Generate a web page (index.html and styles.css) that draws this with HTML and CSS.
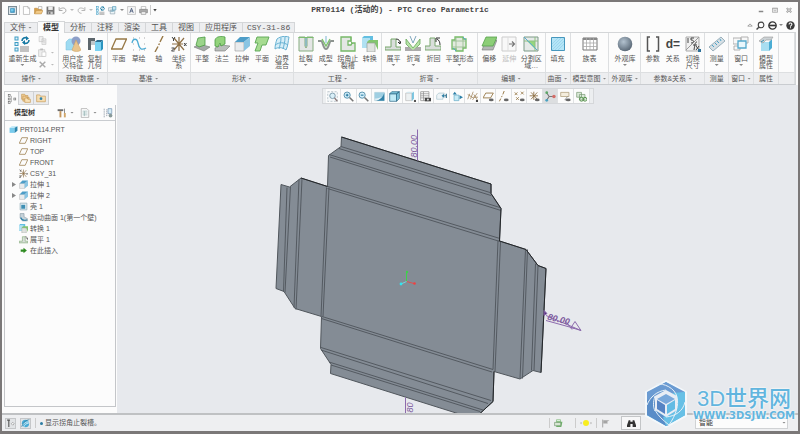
FILE: index.html
```html
<!DOCTYPE html>
<html lang="zh-CN">
<head>
    <meta charset="UTF-8">
    <meta name="viewport" content="width=device-width, initial-scale=1.0">
    <title>PRT0114 (活动的) - PTC Creo Parametric</title>
    <link rel="stylesheet" href="styles.css">
</head>
<body>
    <!-- icon sprite -->
    <svg class="sprite" aria-hidden="true">
        <symbol id="i-app" viewBox="0 0 16 16"><path d="M1 1h14v14H1z" fill="#e9f1f5" stroke="#7d8d96" stroke-width="2"/><path d="M4 4h8v8H4z" fill="#2c86b5"/><path d="M5 5h5v5H5z" fill="#74c8ea"/></symbol>
        <symbol id="i-new" viewBox="0 0 16 16"><path d="M2.500 1h8l3 3v11h-11z" fill="#fff" stroke="#999"/><path d="M10.500 1v3h3" fill="none" stroke="#999"/></symbol>
        <symbol id="i-open" viewBox="0 0 16 16"><path d="M8 1h6v6H8z" fill="#fff" stroke="#999"/><path d="M1 14V4h5l1 2h6v3" fill="#d9a24a" stroke="#b98236"/><path d="M1 14l3-6h12l-3 6z" fill="#f0c987" stroke="#c1904a"/></symbol>
        <symbol id="i-save" viewBox="0 0 16 16"><path d="M1 1h14v14H1z" fill="#777"/><path d="M4 1h8v6H4z" fill="#eee"/><path d="M4 10h8v5H4z" fill="#ccc"/><path d="M5 11h3v3H5z" fill="#666"/></symbol>
        <symbol id="i-undo" viewBox="0 0 16 16"><path d="M3 6c4-4 11-3 11 2 0 3-3 5-6 5M2 2v6h6" fill="none" stroke="#999" stroke-width="1.500"/></symbol>
        <symbol id="i-redo" viewBox="0 0 16 16"><path d="M13 6C9 2 2 3 2 8c0 3 3 5 6 5M14 2v6H8" fill="none" stroke="#aaa" stroke-width="1.500"/></symbol>
        <symbol id="i-regen" viewBox="0 0 16 16"><g fill="#dff1f8" stroke="#3e9cc4"><rect x="1" y="1" width="3" height="3"/><rect x="1" y="6.500" width="3" height="3"/><rect x="1" y="12" width="3" height="3"/></g><path d="M6 11h9M6 13h9M6 15h9" stroke="#888"/><path d="M8 5c0-3 3-4 5-3M15 4c0 3-3 4-5 3" fill="none" stroke="#1679a3" stroke-width="1.600"/><path d="M12 0l3 2.500-3 2zM11 9L8 6.500 11 4z" fill="#1679a3"/></symbol>
        <symbol id="i-windows" viewBox="0 0 16 16"><path d="M1 3h8v6H1zM4 7h8v7H4z" fill="#eef5f8" stroke="#829aa5"/><path d="M8 1h6v6H8z" fill="#c9e6f2" stroke="#3e8eb0"/><path d="M5 9h6" stroke="#3e8eb0"/></symbol>
        <symbol id="i-close" viewBox="0 0 16 16"><path d="M1 1h14v14H1z" fill="#f5f5f5" stroke="#aaa"/><path d="M5 12l3-8 3 8M6 9h4" fill="none" stroke="#457" stroke-width="1.500"/></symbol>
        <symbol id="i-print" viewBox="0 0 16 16"><path d="M4 1h8v5H4z" fill="#fff" stroke="#999"/><path d="M1 6h14v6H1z" fill="#aaa" stroke="#777"/><path d="M4 10h8v5H4z" fill="#eee" stroke="#888"/></symbol>
        <symbol id="i-copy" viewBox="0 0 16 16"><path d="M2 1h7v9H2zM7 5h7v10H7z" fill="#f2f2f2" stroke="#bbb"/><path d="M9 8h4M9 10h4M9 12h4" stroke="#ccc"/></symbol>
        <symbol id="i-paste" viewBox="0 0 16 16"><path d="M1 3h11v12H1z" fill="#eee" stroke="#bbb"/><path d="M4 1h5v3H4z" fill="#bbb"/><path d="M7 7h7v8H7z" fill="#fff" stroke="#bbb"/></symbol>
        <symbol id="i-delete" viewBox="0 0 16 16"><path d="M3 3l10 10M13 3L3 13" stroke="#aaa" stroke-width="2.500"/></symbol>
        <symbol id="i-udf" viewBox="0 0 16 16"><path d="M1 6l3-3h8v8l-3 3H1z" fill="#9edbf2" stroke="#79bddb" stroke-width=".5"/><circle cx="11" cy="5" r="4.500" fill="#8d9fc8"/><path d="M11 4l5 10c-2 2-7 2-9 0z" fill="#e8c48c" stroke="#c99c5c" stroke-width=".5"/></symbol>
        <symbol id="i-copygeom" viewBox="0 0 16 16"><path d="M1 2h7v3H4v9H1z" fill="#5d666c"/><path d="M4 5h5v4H4z" fill="#c0c7cb"/><path d="M8 6h6v9H8z" fill="#79d2f3"/><path d="M8 6l2-2h6l-2 2z" fill="#2d6e91"/><path d="M14 6l2-2v9l-2 2z" fill="#2b94bf"/></symbol>
        <symbol id="i-plane" viewBox="0 0 16 16"><path d="M5 3h10.500L11 13H.5z" fill="none" stroke="#977846" stroke-width="1.300"/></symbol>
        <symbol id="i-sketch" viewBox="0 0 16 16"><path d="M2 2h1M8 2h1M13 2h1M2 14h1M8 14h1M13 14h1M2 8h1M13 8h1" stroke="#aaa"/><path d="M1 7c1-5 5-5 6 0s3 8 8 5" fill="none" stroke="#4baad3" stroke-width="1.300"/></symbol>
        <symbol id="i-axis" viewBox="0 0 16 16"><path d="M12 0L9 6M8.500 7.500l-.8 1.500M7 10.500L4 16" stroke="#977846" stroke-width="1.400"/></symbol>
        <symbol id="i-csys" viewBox="0 0 16 16"><path d="M1 8h11M8 1v14M3 2l10 12M13 2L3 14" stroke="#8f7147" stroke-width="1.200"/><path d="M13 7l2.500 3M15.500 7L13 10M1 1l1.500 2L4 1M2.500 3v2M.5 12h3l-3 3h3" fill="none" stroke="#444"/></symbol>
        <symbol id="i-flat" viewBox="0 0 16 16"><path d="M0 11l6-3 10 3-6 4z" fill="#a3aaa6" stroke="#777" stroke-width=".6"/><path d="M2 9l2-7 7-1v8l-6 2z" fill="#9bd48a" stroke="#4a9a43" stroke-width=".8"/></symbol>
        <symbol id="i-flange" viewBox="0 0 16 16"><path d="M1 12l6-3 9 1-5 5H1z" fill="#b9bebb" stroke="#777" stroke-width=".6"/><path d="M1 10V4c1-4 7-4 10-3v7l-4 2-1-3-2 4z" fill="#93d47c" stroke="#4a9a43" stroke-width=".8"/></symbol>
        <symbol id="i-extrude" viewBox="0 0 16 16"><path d="M1 6h9v9H1z" fill="#e9ebed" stroke="#999" stroke-width=".6"/><path d="M1 6l5-5h10l-6 5z" fill="#4d9dc8"/><path d="M10 6l6-5v9l-6 5z" fill="#8ac5e3"/></symbol>
        <symbol id="i-planar" viewBox="0 0 16 16"><path d="M3 1h12l-3 8H8l-2 6H1l3-8H1z" fill="#a6db91" stroke="#59a652" stroke-width=".9"/></symbol>
        <symbol id="i-blend" viewBox="0 0 16 16"><path d="M3 3c4-3 8-3 12-2-1 5-1 9-3 13-4-3-8-3-11-1 0-4 1-7 2-10z" fill="#d6eef8" stroke="#67b1d2"/><path d="M7 1.500C7 6 6 9 5 13M11 1c0 5-1 8-2 12M1 9c5-3 8-3 13 0" fill="none" stroke="#67b1d2"/></symbol>
        <symbol id="i-rip" viewBox="0 0 16 16"><path d="M1 1h6v9l1 2 1-2V1h6v14H1z" fill="#e4e6e5" stroke="#86ad80"/><path d="M.5 1.500h15" stroke="#7dbd6f"/><path d="M8 2v8" stroke="#5aa0bf"/></symbol>
        <symbol id="i-form" viewBox="0 0 16 16"><path d="M0 5h3c2 0 2 8 5 8s3-8 5-8h3" fill="none" stroke="#8d9490" stroke-width="2"/><path d="M4 3l4 7 4-7" fill="none" stroke="#7cc36c" stroke-width="1.400"/><path d="M8 0v7" stroke="#7ab7d1"/></symbol>
        <symbol id="i-relief" viewBox="0 0 16 16"><path d="M1 1h10v4H8v4h3l1-2h3v8H1z" fill="#e4e7e4" stroke="#76b867" stroke-width="1.300"/><path d="M11 1v5l2 2" fill="none" stroke="#76b867"/></symbol>
        <symbol id="i-convert" viewBox="0 0 16 16"><path d="M0 2l2-2h9v6H6v6H0z" fill="#63bfe1"/><path d="M0 2h8v10H0z" fill="#b0e1f2"/><path d="M5 6l2-2h9v10l-3-6H5z" fill="#83c56f"/><path d="M5 7h8v9H5z" fill="#dfe2df" stroke="#9a9f9a" stroke-width=".7"/></symbol>
        <symbol id="i-unbend" viewBox="0 0 16 16"><path d="M0 11h6V3h5v8h5v3H0z" fill="#d9dedb" stroke="#77a66b"/><path d="M11 3c3 0 4 2 4 4M13 6l2 2 1-3" fill="none" stroke="#333"/></symbol>
        <symbol id="i-bend" viewBox="0 0 16 16"><path d="M1 3l7 9 7-9v5l-7 7-7-7z" fill="#b7e5a8" stroke="#67a85a" stroke-width=".8"/><path d="M0 11h4l4 3 4-3h4v4H0z" fill="#ababab"/><path d="M5 0l3 7 3-7" fill="none" stroke="#7fa7bd"/></symbol>
        <symbol id="i-bendback" viewBox="0 0 16 16"><path d="M0 10h5V2h5v8h6v4H0z" fill="#d9dedb" stroke="#7aa870"/><path d="M15 9c0-3-1-5-3-6M11 6V2h4" fill="none" stroke="#333"/></symbol>
        <symbol id="i-flatpat" viewBox="0 0 16 16"><path d="M4 1h8v2h3v9h-3v3H5v-2H1V4h3z" fill="#e3eadf" stroke="#75ba65" stroke-width="1.300"/><path d="M5 1v14M12 3v9M1 5h14M1 11h14" stroke="#95bb8d" stroke-width=".8"/><path d="M2 12l3 3M12 1l3 3" stroke="#52a9ce"/></symbol>
        <symbol id="i-offset" viewBox="0 0 16 16"><path d="M5 4h11l-4 10H1z" fill="#b3b7b5" stroke="#777" stroke-width=".6"/><path d="M5 1h11l-4 9H1z" fill="#8cce77" stroke="#56a14b" stroke-width=".8"/></symbol>
        <symbol id="i-extend" viewBox="0 0 16 16"><path d="M1 1h14v14H1z" fill="#f8f8f8" stroke="#ccc"/><path d="M7 1v14" stroke="#ddd"/><path d="M8 8h5M11 5.500L13.500 8 11 10.500" fill="none" stroke="#777" stroke-width="1.200"/></symbol>
        <symbol id="i-split" viewBox="0 0 16 16"><path d="M1 1h14v14H1z" fill="#e6eae8" stroke="#7c9a87"/><path d="M4 5h8v8z" fill="#94d67e"/><path d="M1 5h14M12 1v14" stroke="#8fc082"/><path d="M1 1l13 13" stroke="#58abd0"/></symbol>
        <symbol id="i-fill" viewBox="0 0 16 16"><path d="M1.500 1.500h13v13h-13z" fill="#b5e5f7" stroke="#4797bd"/><path d="M2 8l6-6M2 14L14 2M8 14l6-6M2 11l9-9M5 14l9-9" stroke="#8fd0ea" stroke-width=".7"/></symbol>
        <symbol id="i-table" viewBox="0 0 16 16"><path d="M1 2h14v12H1z" fill="#fff" stroke="#777"/><path d="M1 2h14v2H1z" fill="#888"/><path d="M1 7h14M1 10.500h14M4.500 2v12M8 2v12M11.500 2v12" stroke="#aaa" stroke-width=".8"/></symbol>
        <symbol id="i-sphere" viewBox="0 0 16 16"><defs><radialGradient id="ball" cx=".4" cy=".35" r=".7"><stop offset="0" stop-color="#b3c2cf"/><stop offset=".6" stop-color="#7b8a98"/><stop offset="1" stop-color="#546270"/></radialGradient></defs><circle cx="8" cy="8" r="7.300" fill="url(#ball)"/></symbol>
        <symbol id="i-param" viewBox="0 0 16 16"><path d="M5 1H2.500v14H5M11 1h2.500v14H11" fill="none" stroke="#555" stroke-width="1.500"/></symbol>
        <symbol id="i-dims" viewBox="0 0 16 16"><path d="M1 1h13v14H1z" fill="#f0f0f0" stroke="#aaa"/><path d="M1 14L14 1" stroke="#999"/><path d="M3 2v5M9 2H6v2c4 0 3 3 0 3M12 6c-2 0-2 2-3 8M8 9h4M11 10l3 4M14 10l-3 4" fill="none" stroke="#444"/><path d="M13 13h3v3h-3z" fill="#2c7199"/></symbol>
        <symbol id="i-measure" viewBox="0 0 16 16"><path d="M0 11L12 1l4 4L4 15z" fill="#d7e0e5" stroke="#9ab0bc"/><path d="M3 9l2 2M6 7l2 2M8 5l2 2M11 3l1 2" stroke="#4da2c8"/></symbol>
        <symbol id="i-window" viewBox="0 0 16 16"><path d="M0 2h8v6H0zM8 1h7v6H8zM1 10h6v4H1z" fill="#f8f8f8" stroke="#aaa" stroke-width=".9"/><path d="M5 5h8v7H5z" fill="#e9f7fc" stroke="#55a9cc" stroke-width="1.300"/></symbol>
        <symbol id="i-props" viewBox="0 0 16 16"><path d="M3 6h8v9H3z" fill="#a9def1"/><path d="M11 6l3-3v9l-3 3z" fill="#4badd4"/><path d="M1 5l5-4h9l-2 3H8L5 7z" fill="#ccd2d5" stroke="#999" stroke-width=".6"/><path d="M3 6l3-2" stroke="#398eae"/></symbol>
        <symbol id="i-fit" viewBox="0 0 16 16"><path d="M1 1h14v14H1z" fill="#f5f8fa" stroke="#a8b5bc" stroke-dasharray="3 2"/><circle cx="8" cy="7" r="4" fill="#d9eff8" stroke="#7898a8" stroke-width="1.300"/><path d="M11 10l4 5" stroke="#877" stroke-width="2"/></symbol>
        <symbol id="i-zoomin" viewBox="0 0 16 16"><circle cx="6" cy="6" r="4.500" fill="#d5effa" stroke="#5a93ae" stroke-width="1.400"/><path d="M9.500 9.500L15 15" stroke="#777" stroke-width="2.300"/><path d="M4 6h4M6 4v4" stroke="#146c96" stroke-width="1.400"/></symbol>
        <symbol id="i-zoomout" viewBox="0 0 16 16"><circle cx="6" cy="6" r="4.500" fill="#d5effa" stroke="#5a93ae" stroke-width="1.400"/><path d="M9.500 9.500L15 15" stroke="#777" stroke-width="2.300"/><path d="M4 6h4" stroke="#146c96" stroke-width="1.400"/></symbol>
        <symbol id="i-repaint" viewBox="0 0 16 16"><path d="M1 2h14v12H1z" fill="#dff1f7" stroke="#b5cdd6"/><path d="M1 2h14v3C12 10 7 10 1 11z" fill="#9fcfe2"/><path d="M15 3v11H3C9 13 13 9 15 3z" fill="#3182a8"/></symbol>
        <symbol id="i-shade" viewBox="0 0 16 16"><path d="M1 4h10v11H1z" fill="#c2ebf7" stroke="#276583"/><path d="M1 4l3-3h11l-4 3zM11 4l4-3v10l-4 4z" fill="#7fc7de" stroke="#276583"/></symbol>
        <symbol id="i-views" viewBox="0 0 16 16"><path d="M1 3h9v11H1z" fill="#edf1f2" stroke="#bbb"/><path d="M10 3l3-2v10l-3 4z" fill="#79c4df"/><path d="M1 3l3-2h9l-3 2z" fill="#d3e7ee"/><path d="M13 13h3v3h-3z" fill="#555"/></symbol>
        <symbol id="i-viewmgr" viewBox="0 0 16 16"><path d="M1 1h12v13H1z" fill="#fff" stroke="#888"/><path d="M1 4h12M1 7h12M1 10h12M5 1v13" stroke="#888"/><path d="M7 10h9v5H7z" fill="#444"/><circle cx="11.500" cy="12.500" r="1.500" fill="#ddd"/></symbol>
        <symbol id="i-dir" viewBox="0 0 16 16"><path d="M1 6l3-3h8l-2 3v6H1z" fill="#eef5f8" stroke="#a7c3ce"/><path d="M15 4v6M15 7h-3" stroke="#2d6f8c" stroke-width="1.600"/><path d="M12 4v6L8 7z" fill="#2d7fa5"/></symbol>
        <symbol id="i-dir2" viewBox="0 0 16 16"><path d="M3 6h7v8H3z" fill="#c8ebf6" stroke="#64aac6"/><path d="M4 1l3 4H1zM16 9l-5-3v6z" fill="#2b7fa7"/></symbol>
        <symbol id="i-datums" viewBox="0 0 16 16"><path d="M1 12L4 4M1 5l8 5M5 12L9 1M8 13l7-10M10 5l5 8M9 9h7" stroke="#97774a"/><path d="M13 13h3v3h-3z" fill="#444"/></symbol>
        <symbol id="i-planeshow" viewBox="0 0 16 16"><path d="M4 3h11l-4 7H0z" fill="none" stroke="#977846" stroke-width="1.300"/><ellipse cx="12" cy="13" rx="3.500" ry="2" fill="#666"/></symbol>
        <symbol id="i-axisshow" viewBox="0 0 16 16"><path d="M9 0L7 5M6 7l-1 2M4 11l-2 4" stroke="#977846" stroke-width="1.400"/><ellipse cx="12" cy="13" rx="3.500" ry="2" fill="#666"/></symbol>
        <symbol id="i-pointshow" viewBox="0 0 16 16"><path d="M1 2l4 4M5 2L1 6M10 1l4 4M14 1l-4 4M3 9l4 4M7 9l-4 4" stroke="#977846" stroke-width="1.200"/><ellipse cx="12" cy="13" rx="3.500" ry="2" fill="#666"/></symbol>
        <symbol id="i-csysshow" viewBox="0 0 16 16"><path d="M1 7h12M7 1v12M3 2l9 10M12 2L3 12" stroke="#8f7147" stroke-width="1.300"/><ellipse cx="12" cy="13" rx="3.500" ry="2" fill="#666"/></symbol>
        <symbol id="i-spin" viewBox="0 0 16 16"><path d="M2 2l4 6 6 0M6 8l-4 6" fill="none" stroke="#777" stroke-width="1.500"/><circle cx="13" cy="8" r="2.500" fill="#d36d68"/><circle cx="2.500" cy="2.500" r="2" fill="#5da667"/><circle cx="2.500" cy="13.500" r="2" fill="#4aa2c1"/></symbol>
        <symbol id="i-annot" viewBox="0 0 16 16"><path d="M1 2h12v6H1z" fill="#f4eddd" stroke="#a89671"/><path d="M11 8l-4 5h4" fill="none" stroke="#777"/><ellipse cx="12" cy="13" rx="3.500" ry="2" fill="#666"/></symbol>
        <symbol id="i-sim" viewBox="0 0 16 16"><path d="M1 2h7v7H1zM5 5h8v8H5z" fill="#dbead9" stroke="#759670"/><circle cx="8" cy="12" r="2.800" fill="none" stroke="#54924b" stroke-width="1.400"/><circle cx="13" cy="12" r="2.800" fill="none" stroke="#54924b" stroke-width="1.400"/></symbol>
        <symbol id="i-tree" viewBox="0 0 16 16"><g fill="#fff" stroke="#666"><rect x="2" y="1" width="3" height="3"/><rect x="2" y="6.500" width="3" height="3"/><rect x="2" y="12" width="3" height="3"/><rect x="11" y="6.500" width="3" height="3"/></g><path d="M7 3v10" stroke="#888"/></symbol>
        <symbol id="i-folders" viewBox="0 0 16 16"><path d="M1 2h5l1 2h4v6H1zM3 5h5l1 2h4v6H3z" fill="#f2d09a" stroke="#c4954f"/><path d="M6 8h4l1 2h4v5H6z" fill="#f8e1b8" stroke="#c4954f"/></symbol>
        <symbol id="i-fav" viewBox="0 0 16 16"><path d="M1 3h5l1 2h8v9H1z" fill="#f6ddb0" stroke="#c4954f"/><circle cx="8" cy="9" r="2.200" fill="#2f83ab"/></symbol>
        <symbol id="i-tools" viewBox="0 0 16 16"><path d="M1 2h9v3H1z" fill="#6c6c6c"/><path d="M4 5h3v10H4z" fill="#c3965d"/><path d="M12 1v8" stroke="#888" stroke-width="1.500"/><path d="M11 8h3v7h-3z" fill="#d1a669"/></symbol>
        <symbol id="i-doc" viewBox="0 0 16 16"><path d="M2 1h9l3 3v11H2z" fill="#fff" stroke="#999"/><path d="M4 5h8M4 8h8M4 11h8M7 5v8" stroke="#8aa"/></symbol>
        <symbol id="i-filter" viewBox="0 0 16 16"><path d="M1 2h3M1 5h3M1 8h3M1 11h3M1 14h3M6 2v12" stroke="#678" stroke-dasharray="2 1"/><path d="M8 1h6v8H8z" fill="#d6edf6" stroke="#68a"/><circle cx="12" cy="12" r="3" fill="#899"/></symbol>
        <symbol id="i-part" viewBox="0 0 16 16"><path d="M1 5h9v9H1z" fill="#78cbed"/><path d="M1 5l4-3h10l-5 3z" fill="#b4e5f6"/><path d="M10 5l5-3v8l-5 4z" fill="#2c86ad"/></symbol>
        <symbol id="i-shell" viewBox="0 0 16 16"><path d="M2 2h12v12H2z" fill="#e2eef3" stroke="#9bb4bf" stroke-width="1.500"/><path d="M4 5h7v7H4z" fill="#3e8fb4"/></symbol>
        <symbol id="i-driven" viewBox="0 0 16 16"><path d="M2 1h7v6l6 3v4H6l-4-5z" fill="#c6d3da" stroke="#7e929d"/><path d="M3 8c2 5 6 6 11 4" fill="none" stroke="#2e82a9" stroke-width="2"/></symbol>
        <symbol id="i-insert" viewBox="0 0 16 16"><path d="M3 6h5V3l6 5-6 5v-3H3z" fill="#2f8b22"/></symbol>
        <symbol id="i-help" viewBox="0 0 16 16"><circle cx="8" cy="8" r="7.500" fill="#3a3a3a"/><path d="M5.500 6c0-4 5.500-3 5 0-.3 2-2.500 1.500-2.500 4M8 11v2" fill="none" stroke="#fff" stroke-width="1.800"/></symbol>
        <symbol id="i-find" viewBox="0 0 16 16"><circle cx="9" cy="7" r="5" fill="#fff" stroke="#444" stroke-width="2"/><path d="M5 11l-4 4" stroke="#444" stroke-width="2.500"/></symbol>
        <symbol id="i-web" viewBox="0 0 16 16"><circle cx="8" cy="8" r="6.500" fill="#fff" stroke="#333" stroke-width="2.500"/><path d="M2 8h12" stroke="#333" stroke-width="3"/></symbol>
        <symbol id="i-up" viewBox="0 0 16 16"><path d="M2 11l6-6 6 6z" fill="#fff" stroke="#888" stroke-width="2"/></symbol>
        <symbol id="i-min" viewBox="0 0 16 16"><path d="M2 12h12" stroke="#888" stroke-width="4"/></symbol>
        <symbol id="i-max" viewBox="0 0 16 16"><path d="M1 3h14v11H1zM1 5h14" fill="none" stroke="#999" stroke-width="2"/><path d="M4 10h8" stroke="#999" stroke-width="2"/></symbol>
        <symbol id="i-x" viewBox="0 0 16 16"><path d="M2 3l12 11M14 3L2 14" stroke="#999" stroke-width="5"/><path d="M3 4l10 9M13 4L3 13" stroke="#fff" stroke-width="1.500"/></symbol>
        <symbol id="i-globe" viewBox="0 0 16 16"><circle cx="8" cy="8" r="6.500" fill="#49abd5"/><path d="M2 10c4-1 5-5 12-5M5 14c1-4 4-6 9-7" fill="none" stroke="#e4f5fb" stroke-width="1.500"/><path d="M1 14C4 5 9 2 15 1" fill="none" stroke="#256f91"/></symbol>
        <symbol id="i-nav" viewBox="0 0 16 16"><path d="M2 2h5M5 2v12" stroke="#555" stroke-width="2"/><path d="M12 6l2.500 2.500L12 11 9.500 8.500z" fill="#fff" stroke="#777"/></symbol>
        <symbol id="i-state" viewBox="0 0 16 16"><path d="M4 5V1h8v4h3l-2 9H4z" fill="#72b56d"/><path d="M1 6h11v6H1z" fill="#d7e6d4" stroke="#60875c"/><path d="M5 3h6" stroke="#e8f5e6" stroke-width="2"/></symbol>
        <symbol id="i-dots" viewBox="0 0 32 16"><circle cx="3" cy="8" r="3" fill="#ccc"/><circle cx="16" cy="8" r="8" fill="#f8ed20"/><circle cx="29" cy="8" r="3" fill="#ccc"/></symbol>
        <symbol id="i-flag" viewBox="0 0 16 16"><path d="M3 1v14" stroke="#999" stroke-width="1.500"/><path d="M4 2h11l-4 3 1 3H4z" fill="#a5a5a5"/></symbol>
        <symbol id="i-bino" viewBox="0 0 16 16"><path d="M3 2h3v3h4V2h3l3 9v3h-6V9H6v5H0v-3z" fill="#333"/></symbol>
    </svg>

    <div class="window">
        <header class="title-bar">
            <div class="quick-access">
                <svg class="icon-s"><use href="#i-app"/></svg>
                <i class="bar"></i>
                <button class="qa" aria-label="新建"><svg class="icon-s"><use href="#i-new"/></svg></button>
                <button class="qa" aria-label="打开"><svg class="icon-s"><use href="#i-open"/></svg></button>
                <button class="qa" aria-label="保存"><svg class="icon-s"><use href="#i-save"/></svg></button>
                <button class="qa" aria-label="撤消"><svg class="icon-s"><use href="#i-undo"/></svg><i class="arrow pale"></i></button>
                <button class="qa" aria-label="重做"><svg class="icon-s"><use href="#i-redo"/></svg><i class="arrow pale"></i></button>
                <button class="qa" aria-label="重新生成"><svg class="icon-s"><use href="#i-regen"/></svg></button>
                <button class="qa" aria-label="窗口"><svg class="icon-s"><use href="#i-windows"/></svg><i class="arrow"></i></button>
                <button class="qa" aria-label="关闭"><svg class="icon-s"><use href="#i-close"/></svg></button>
                <button class="qa" aria-label="打印"><svg class="icon-s"><use href="#i-print"/></svg></button>
                <i class="bar"></i>
                <button class="qa" aria-label="自定义"><i class="arrow dark"></i></button>
            </div>
            <h1>PRT0114 (活动的) - PTC Creo Parametric</h1>
            <div class="window-buttons">
                <button aria-label="最小化"><svg class="icon-xs"><use href="#i-min"/></svg></button>
                <button aria-label="最大化"><svg class="icon-xs"><use href="#i-max"/></svg></button>
                <button aria-label="关闭窗口"><svg class="icon-xs"><use href="#i-x"/></svg></button>
            </div>
        </header>

        <nav class="tabs">
            <button class="tab file">文件<i class="arrow"></i></button>
            <button class="tab active">模型</button>
            <button class="tab">分析</button>
            <button class="tab">注释</button>
            <button class="tab">渲染</button>
            <button class="tab">工具</button>
            <button class="tab">视图</button>
            <button class="tab">应用程序</button>
            <button class="tab mono">CSY-31-86</button>
            <div class="help-buttons">
                <button aria-label="收起"><svg class="icon-xs"><use href="#i-up"/></svg></button>
                <button aria-label="搜索"><svg class="icon-s"><use href="#i-find"/></svg></button>
                <button aria-label="在线"><svg class="icon-s"><use href="#i-web"/></svg><i class="arrow"></i></button>
                <button aria-label="帮助"><svg class="icon-s"><use href="#i-help"/></svg></button>
            </div>
        </nav>

        <section class="ribbon">
            <div class="group">
                <div class="tools">
                    <button class="tool wide"><svg class="icon"><use href="#i-regen"/></svg><span>重新生成</span><i class="arrow"></i></button>
                    <div class="mini-tools">
                        <button aria-label="复制"><svg class="icon-s"><use href="#i-copy"/></svg></button>
                        <button aria-label="粘贴"><svg class="icon-s"><use href="#i-paste"/></svg><i class="arrow pale"></i></button>
                        <button aria-label="删除"><svg class="icon-s"><use href="#i-delete"/></svg><i class="arrow pale"></i></button>
                    </div>
                </div>
                <button class="group-name">操作<i class="arrow"></i></button>
            </div>
            <div class="group">
                <div class="tools">
                    <button class="tool mid"><svg class="icon"><use href="#i-udf"/></svg><span>用户定<br>义特征</span></button>
                    <button class="tool"><svg class="icon"><use href="#i-copygeom"/></svg><span>复制<br>几何</span></button>
                </div>
                <button class="group-name">获取数据<i class="arrow"></i></button>
            </div>
            <div class="group">
                <div class="tools">
                    <button class="tool"><svg class="icon"><use href="#i-plane"/></svg><span>平面</span></button>
                    <button class="tool"><svg class="icon"><use href="#i-sketch"/></svg><span>草绘</span></button>
                    <button class="tool"><svg class="icon"><use href="#i-axis"/></svg><span>轴</span></button>
                    <button class="tool"><svg class="icon"><use href="#i-csys"/></svg><span>坐标<br>系</span></button>
                </div>
                <button class="group-name">基准<i class="arrow"></i></button>
            </div>
            <div class="group">
                <div class="tools">
                    <button class="tool"><svg class="icon"><use href="#i-flat"/></svg><span>平整</span></button>
                    <button class="tool"><svg class="icon"><use href="#i-flange"/></svg><span>法兰</span></button>
                    <button class="tool"><svg class="icon"><use href="#i-extrude"/></svg><span>拉伸</span></button>
                    <button class="tool"><svg class="icon"><use href="#i-planar"/></svg><span>平面</span></button>
                    <button class="tool"><svg class="icon"><use href="#i-blend"/></svg><span>边界<br>混合</span></button>
                </div>
                <button class="group-name">形状<i class="arrow"></i></button>
            </div>
            <div class="group">
                <div class="tools">
                    <button class="tool"><svg class="icon"><use href="#i-rip"/></svg><span>扯裂</span><i class="arrow"></i></button>
                    <button class="tool"><svg class="icon"><use href="#i-form"/></svg><span>成型</span><i class="arrow"></i></button>
                    <button class="tool mid"><svg class="icon"><use href="#i-relief"/></svg><span>拐角止<br>裂槽</span></button>
                    <button class="tool"><svg class="icon"><use href="#i-convert"/></svg><span>转换</span></button>
                </div>
                <button class="group-name">工程<i class="arrow"></i></button>
            </div>
            <div class="group">
                <div class="tools">
                    <button class="tool"><svg class="icon"><use href="#i-unbend"/></svg><span>展平</span><i class="arrow"></i></button>
                    <button class="tool"><svg class="icon"><use href="#i-bend"/></svg><span>折弯</span><i class="arrow"></i></button>
                    <button class="tool"><svg class="icon"><use href="#i-bendback"/></svg><span>折回</span></button>
                    <button class="tool wide"><svg class="icon"><use href="#i-flatpat"/></svg><span>平整形态</span><i class="arrow"></i></button>
                </div>
                <button class="group-name">折弯<i class="arrow"></i></button>
            </div>
            <div class="group">
                <div class="tools">
                    <button class="tool"><svg class="icon"><use href="#i-offset"/></svg><span>偏移</span></button>
                    <button class="tool" disabled><svg class="icon"><use href="#i-extend"/></svg><span>延伸</span></button>
                    <button class="tool mid"><svg class="icon"><use href="#i-split"/></svg><span>分割区<br>域…</span></button>
                </div>
                <button class="group-name">编辑<i class="arrow"></i></button>
            </div>
            <div class="group">
                <div class="tools">
                    <button class="tool"><svg class="icon"><use href="#i-fill"/></svg><span>填充</span></button>
                </div>
                <button class="group-name">曲面<i class="arrow"></i></button>
            </div>
            <div class="group">
                <div class="tools">
                    <button class="tool"><svg class="icon"><use href="#i-table"/></svg><span>族表</span></button>
                </div>
                <button class="group-name">模型意图<i class="arrow"></i></button>
            </div>
            <div class="group">
                <div class="tools">
                    <button class="tool mid"><svg class="icon"><use href="#i-sphere"/></svg><span>外观库</span><i class="arrow"></i></button>
                </div>
                <button class="group-name">外观库<i class="arrow"></i></button>
            </div>
            <div class="group">
                <div class="tools">
                    <button class="tool"><svg class="icon"><use href="#i-param"/></svg><span>参数</span></button>
                    <button class="tool"><b class="formula">d=</b><span>关系</span></button>
                    <button class="tool"><svg class="icon"><use href="#i-dims"/></svg><span>切换<br>尺寸</span></button>
                </div>
                <button class="group-name">参数&amp;关系<i class="arrow"></i></button>
            </div>
            <div class="group">
                <div class="tools">
                    <button class="tool"><svg class="icon"><use href="#i-measure"/></svg><span>测量</span><i class="arrow"></i></button>
                </div>
                <button class="group-name">测量</button>
            </div>
            <div class="group">
                <div class="tools">
                    <button class="tool"><svg class="icon"><use href="#i-window"/></svg><span>窗口</span><i class="arrow"></i></button>
                </div>
                <button class="group-name">窗口<i class="arrow"></i></button>
            </div>
            <div class="group">
                <div class="tools">
                    <button class="tool"><svg class="icon"><use href="#i-props"/></svg><span>模型<br>属性</span></button>
                </div>
                <button class="group-name">属性</button>
            </div>
            <div class="group">
                <div class="tools"></div>
                <div class="group-name"></div>
            </div>
        </section>

        <main class="main">
            <aside class="navigator">
                <div class="nav-tabs">
                    <button class="nav-tab active" aria-label="模型树"><svg class="icon-m"><use href="#i-tree"/></svg></button>
                    <button class="nav-tab" aria-label="文件夹浏览器"><svg class="icon-m"><use href="#i-folders"/></svg></button>
                    <button class="nav-tab" aria-label="收藏夹"><svg class="icon-m"><use href="#i-fav"/></svg></button>
                </div>
                <div class="nav-panel">
                    <div class="nav-head">
                        <h2>模型树</h2>
                        <button aria-label="设置"><svg class="icon-m"><use href="#i-tools"/></svg><i class="arrow"></i></button>
                        <button aria-label="显示"><svg class="icon-m"><use href="#i-doc"/></svg><i class="arrow"></i></button>
                        <button aria-label="过滤"><svg class="icon-m"><use href="#i-filter"/></svg></button>
                    </div>
                    <ul class="tree">
                        <li class="root"><svg class="icon-s"><use href="#i-part"/></svg>PRT0114.PRT</li>
                        <li><svg class="icon-s"><use href="#i-plane"/></svg>RIGHT</li>
                        <li><svg class="icon-s"><use href="#i-plane"/></svg>TOP</li>
                        <li><svg class="icon-s"><use href="#i-plane"/></svg>FRONT</li>
                        <li><svg class="icon-s"><use href="#i-csys"/></svg>CSY_31</li>
                        <li class="parent"><svg class="icon-s"><use href="#i-extrude"/></svg>拉伸 1</li>
                        <li class="parent"><svg class="icon-s"><use href="#i-extrude"/></svg>拉伸 2</li>
                        <li><svg class="icon-s"><use href="#i-shell"/></svg>壳 1</li>
                        <li><svg class="icon-s"><use href="#i-driven"/></svg>驱动曲面 1(第一个壁)</li>
                        <li><svg class="icon-s"><use href="#i-convert"/></svg>转换 1</li>
                        <li><svg class="icon-s"><use href="#i-unbend"/></svg>展平 1</li>
                        <li><svg class="icon-s"><use href="#i-insert"/></svg>在此插入</li>
                    </ul>
                </div>
            </aside>

            <section class="canvas">
                <div class="view-bar">
                    <button aria-label="重新调整"><svg class="icon-v"><use href="#i-fit"/></svg></button>
                    <button aria-label="放大"><svg class="icon-v"><use href="#i-zoomin"/></svg></button>
                    <button aria-label="缩小"><svg class="icon-v"><use href="#i-zoomout"/></svg></button>
                    <button aria-label="重画"><svg class="icon-v"><use href="#i-repaint"/></svg></button>
                    <button aria-label="显示样式"><svg class="icon-v"><use href="#i-shade"/></svg></button>
                    <button aria-label="已保存方向"><svg class="icon-v"><use href="#i-views"/></svg></button>
                    <button aria-label="视图管理器"><svg class="icon-v"><use href="#i-viewmgr"/></svg></button>
                    <button aria-label="视图法向"><svg class="icon-v"><use href="#i-dir"/></svg></button>
                    <button aria-label="重定向"><svg class="icon-v"><use href="#i-dir2"/></svg></button>
                    <button aria-label="基准显示过滤器"><svg class="icon-v"><use href="#i-datums"/></svg></button>
                    <button aria-label="平面显示"><svg class="icon-v"><use href="#i-planeshow"/></svg></button>
                    <button aria-label="轴显示"><svg class="icon-v"><use href="#i-axisshow"/></svg></button>
                    <button aria-label="点显示"><svg class="icon-v"><use href="#i-pointshow"/></svg></button>
                    <button aria-label="坐标系显示"><svg class="icon-v"><use href="#i-csysshow"/></svg></button>
                    <button class="on" aria-label="旋转中心"><svg class="icon-v"><use href="#i-spin"/></svg></button>
                    <button aria-label="注释显示"><svg class="icon-v"><use href="#i-annot"/></svg></button>
                    <button aria-label="仿真"><svg class="icon-v"><use href="#i-sim"/></svg></button>
                </div>
                <svg class="model" viewBox="117 105 681 308">
                    <!-- unfolded sheet -->
                    <path class="sheet" d="M341.500 137.500L491 184.500V194L501 209 499.500 241.500 526 250 538 266 546 269 541 373 533 371 520 379.500 494 372 493 402 480 414V421L330.500 374 331 365 320.500 349 321.500 317 295 309 284 292 276 289 281 185 289.500 187.500 301 178.500 327.500 187 328.500 156 341 147z"/>
                    <!-- bend lines -->
                    <path class="bend" d="M341 147L490 193M339 149L491 196M329 155L500 208M330 157.500L501 211M328 187L500 239M327.500 189L500 242M326.500 188L321 317M329 188L323 317M299 180L294 308M302 179L296 310M287 188L283.500 292M290.500 187L285 293M498 241L493 370M500.500 242L495 372M525.500 250L520 379M527.500 250L522.500 379M535.500 264L531.500 371M538 266L534 371M322 317L493 370M321.500 319L492 372.500M321 348L491 401M321 350.500L488 404M329 362.500L483 410.500M331 365.500L480 412"/>
                    <path class="edge" d="M341.500 137.500L491 184.500V194L501 209 499.500 241.500 526 250 538 266 546 269 541 373M494 372L493 402 480 414M301 178.500L327.500 187"/>
                    <!-- dimensions -->
                    <g class="dim">
                        <path d="M417.500 130V161M405.500 398V414M546 316L581 331M546 321L575 329M566 322L572 330M575 322L581 331 571 328z"/>
                        <path class="dot" d="M544 311l3 3-3 2z"/>
                        <text transform="translate(417 158) rotate(-90)">80.00</text>
                        <text transform="translate(413 413) rotate(-90)">80</text>
                        <text class="dim-heavy" transform="translate(547 320) rotate(14)">80.00</text>
                    </g>
                    <!-- spin center -->
                    <path d="M406.500 282V273" stroke="#3fd14a"/><circle cx="407" cy="272.500" r="1.200" fill="#3fd14a"/>
                    <path d="M406.500 282L414 284" stroke="#e05050"/><circle cx="414.500" cy="284" r="1.300" fill="#f04040"/>
                    <path d="M406.500 282L401 284.500" stroke="#6fd8e0"/><circle cx="401" cy="284.500" r="1.400" fill="#2fe6f0"/>
                </svg>
            </section>
        </main>

        <footer class="status">
            <button class="pressed" aria-label="导航器"><svg class="icon-s"><use href="#i-nav"/></svg></button>
            <button class="pressed" aria-label="浏览器"><svg class="icon-s"><use href="#i-globe"/></svg></button>
            <i class="bar"></i>
            <p class="message">显示拐角止裂槽。</p>
            <i class="bar"></i>
            <svg class="icon-s state"><use href="#i-state"/></svg>
            <i class="bar"></i>
            <svg class="dots"><use href="#i-dots"/></svg>
            <i class="bar"></i>
            <svg class="icon-s"><use href="#i-flag"/></svg>
            <button class="find" aria-label="查找"><svg class="icon-s"><use href="#i-bino"/></svg></button>
            <div class="picker">
                <select aria-label="选择过滤器"><option>智能</option></select>
                <i class="arrow"></i>
            </div>
        </footer>

        <div class="watermark">
            <svg class="hex" viewBox="0 0 44 48">
                <path d="M22 1l20 11v24L22 47 2 36V12z" fill="#5fb7e2" stroke="#f4f8fb" stroke-width="2"/>
                <path d="M22 2l19 10-12 3-7-4-11 6-8 8V12z" fill="#6b9bd2"/>
                <path d="M3 20l8-3v13l9 6 5 9-3 1L3 35z" fill="#5a8dc8"/>
                <path d="M41 12v23L22 46l-3-9 4-1 10-6V17l-5-4z" fill="#67c0e6"/>
                <path d="M22 10l11 6v14l-11 7-11-7V16z" fill="#e8edf5"/>
                <path d="M3 25c3-8 10-14 19-15M12 4c8-1 19 4 21 13M41 22c-2 9-9 14-19 15M33 17c2 8-1 18-8 28M11 30c3 6 8 10 14 15M11 16C9 22 9 27 11 31" fill="none" stroke="#e8f1f8"/>
                <path d="M22 14l9 5-9 5-9-5z" fill="#79a8db"/><path d="M13 20l8 5v9l-8-5z" fill="#5583c4"/><path d="M31 20l-8 5v9l8-5z" fill="#62bbe4"/>
            </svg>
            <div class="brand">
                <span class="brand-name">3D世界网</span>
                <span class="brand-url">WWW.3DSJW.COM</span>
            </div>
        </div>
    </div>
</body>
</html>
```
FILE: styles.css
```css
* {
    box-sizing: border-box;
}

body {
    margin: 0;
    font-family: "Liberation Sans", "Noto Sans CJK SC", sans-serif;
    font-size: 7px;
    line-height: 8px;
    color: #555;
}

button {
    display: flex;
    align-items: center;
    justify-content: center;
    margin: 0;
    padding: 0;
    border: none;
    background: none;
    font: inherit;
    color: inherit;
    white-space: nowrap;
    cursor: pointer;
}

.sprite {
    position: absolute;
    width: 0;
    height: 0;
}

.window {
    position: relative;
    display: flex;
    flex-direction: column;
    height: 100vh;
    border: 2px solid #7b7878;
    border-bottom-width: 3px;
    background: #fcfcfc;
}

/* icons */
svg {
    flex: none;
    display: block;
}

.icon {
    width: 16px;
    height: 16px;
}

.icon-v {
    width: 11px;
    height: 11px;
}

.icon-m {
    width: 10px;
    height: 10px;
}

.icon-s {
    width: 9px;
    height: 9px;
}

.icon-xs {
    width: 6px;
    height: 6px;
}

.arrow {
    flex: none;
    width: 4px;
    height: 2px;
    background: #888;
    clip-path: polygon(0 0, 100% 0, 50% 100%);
}

.arrow.pale {
    background: #bbb;
}

.arrow.dark {
    height: 3px;
    background: #444;
}

.bar {
    width: 1px;
    height: 10px;
    background: #ccc;
}

/* title bar */
.title-bar {
    display: grid;
    grid-template-columns: 1fr auto 1fr;
    align-items: center;
    height: 20px;
    padding: 0 6px 4px;
}

.quick-access {
    display: flex;
    align-items: center;
    gap: 3px;
}

.quick-access .bar {
    margin: 0 -1px;
}

.qa {
    gap: 3px;
}

h1 {
    margin: 0;
    font: bold 8px/10px "Liberation Mono", "Noto Sans CJK SC", monospace;
    color: #444;
}

.window-buttons {
    display: flex;
    justify-content: flex-end;
    gap: 8px;
}

/* tabs */
.tabs {
    display: flex;
    height: 10px;
    padding: 0 2px;
    font-size: 8px;
}

.tab {
    height: 10px;
    padding: 0 5px;
    border: 1px solid #d4d6d8;
    border-width: 1px 1px 0 0;
    background: #edeef0;
}

.tab.file {
    gap: 2px;
    border-left-width: 1px;
}

.tab.active {
    position: relative;
    z-index: 1;
    height: 12px;
    margin-top: -1px;
    background: #fcfcfc;
    font-weight: bold;
    color: #333;
}

.tab.mono {
    padding: 0 4px;
    font-family: "Liberation Mono", monospace;
}

.help-buttons {
    display: flex;
    align-items: center;
    gap: 3px;
    margin: -4px 0 0 auto;
    padding-right: 1px;
}

.help-buttons button {
    gap: 2px;
}

/* ribbon */
.ribbon {
    display: grid;
    grid-template-columns: 54fr 49fr 83fr 104fr 88fr 96fr 68fr 25fr 39fr 32fr 64fr 24fr 25fr 25fr 16fr;
    height: 53px;
    margin: 0 2px;
    border: 1px solid #d4d6d8;
    border-bottom-color: #c9ccd0;
}

.group {
    display: flex;
    flex-direction: column;
    min-width: 0;
    border-right: 1px solid #dddfe1;
}

.tools {
    display: flex;
    flex: 1;
    justify-content: center;
    padding-top: 3px;
}

.tool {
    flex: none;
    flex-direction: column;
    justify-content: flex-start;
    width: 20px;
    line-height: 7px;
}

.tool.mid {
    width: 24px;
}

.tool.wide {
    width: 32px;
}

.tool span {
    margin: 3px 0 2px;
}

.tool:disabled {
    color: #bbb;
}

.formula {
    height: 16px;
    font-size: 12px;
    line-height: 16px;
    color: #444;
}

.mini-tools {
    display: flex;
    flex-direction: column;
    gap: 3px;
}

.mini-tools button {
    justify-content: flex-start;
    gap: 3px;
    width: 18px;
}

.group-name {
    gap: 2px;
    height: 12px;
    border-top: 1px solid #dddfe1;
    background: #edeef0;
}

/* navigator */
.main {
    display: flex;
    flex: 1;
    min-height: 0;
}

.navigator {
    display: flex;
    flex-direction: column;
    width: 115px;
    padding: 6px 1px 6px 2px;
}

.nav-tabs {
    display: flex;
    height: 14px;
}

.nav-tab {
    width: 15px;
    border: 1px solid #cfd1d3;
    border-left: none;
    background: #ebecee;
}

.nav-tab.active {
    border-left: 1px solid #cfd1d3;
    border-bottom: none;
    background: #fcfcfc;
}

.nav-panel {
    flex: 1;
    border: 1px solid #c4c6c9;
    border-top: none;
}

.nav-head {
    display: flex;
    align-items: center;
    gap: 6px;
    height: 16px;
    padding: 0 2px 0 9px;
    border-bottom: 1px solid #c9ccd0;
}

.nav-head button {
    gap: 3px;
}

h2 {
    margin: 0 auto 0 0;
    font-size: 7px;
    color: #333;
}

.tree {
    margin: 0;
    padding: 3px 0;
    list-style: none;
    line-height: 11px;
}

.tree li {
    display: flex;
    align-items: center;
    gap: 2px;
    height: 11px;
    padding-left: 14px;
    white-space: nowrap;
}

.tree .root {
    padding-left: 4px;
}

.tree .parent {
    padding-left: 7px;
}

.tree .parent::before {
    content: "";
    width: 5px;
    height: 5px;
    background: #888;
    clip-path: polygon(0 0, 80% 50%, 0 100%);
}

/* canvas */
.canvas {
    display: flex;
    flex: 1;
    flex-direction: column;
    align-items: center;
    min-width: 0;
    padding-top: 3px;
    background: #e7e9ed;
}

.view-bar {
    display: flex;
    width: 272px;
    height: 16px;
    padding: 0 3px;
    border: 1px solid #d5d7da;
    background: #eceef0;
}

.view-bar button {
    flex: 1;
    border-right: 1px solid #dfe1e3;
    background: #fcfcfc;
}

.view-bar .on {
    background: #dcdee0;
}

.model {
    flex: 1;
    width: 100%;
    min-height: 0;
}

.sheet {
    fill: #848c95;
    stroke: #50565c;
    stroke-width: 1;
}

.bend {
    fill: none;
    stroke: #545a61;
    stroke-width: 1;
}

.edge {
    fill: none;
    stroke: #24272a;
    stroke-width: 1;
}

.dim {
    fill: #7d5a9e;
    font-size: 9px;
    font-style: italic;
}

.dim path {
    fill: none;
    stroke: #8d6bad;
}

.dim .dot {
    fill: #55307c;
}

.dim-heavy {
    font-weight: bold;
}

/* status bar */
.status {
    display: flex;
    align-items: center;
    gap: 4px;
    height: 18px;
    padding: 0 10px 0 3px;
    border-top: 2px solid #bfc1c3;
    background: #eeeff1;
}

.pressed {
    width: 11px;
    height: 11px;
    border: 1px solid #c5c7c9;
    background: #e2e4e6;
}

.message {
    flex: 1;
    margin: 0;
}

.message::before {
    content: "";
    display: inline-block;
    width: 3px;
    height: 3px;
    margin-right: 2px;
    border-radius: 50%;
    background: #2d7da3;
    vertical-align: middle;
}

.state {
    margin-right: 8px;
}

.dots {
    width: 12px;
    height: 6px;
}

.find {
    width: 20px;
    height: 14px;
    margin: 0 50px 0 7px;
    border: 1px solid #c3c5c7;
    background: #f7f7f8;
}

.picker {
    position: relative;
    width: 93px;
}

.picker select {
    display: block;
    width: 100%;
    height: 11px;
    padding: 0 3px;
    border: 1px solid #d0d2d4;
    border-radius: 0;
    appearance: none;
    background: #fcfcfc;
    font: inherit;
    color: #333;
}

.picker .arrow {
    position: absolute;
    top: 4px;
    right: 2px;
}

/* site mark over the lower right corner */
.watermark {
    position: absolute;
    right: 3px;
    bottom: 3px;
    display: flex;
    align-items: flex-start;
    gap: 5px;
    pointer-events: none;
}

.hex {
    width: 44px;
    height: 48px;
}

.brand {
    display: flex;
    flex-direction: column;
    align-items: center;
    padding-top: 5px;
    color: #62b5de;
    text-shadow: 0 0 2px #fff, 0 0 2px #fff;
    white-space: nowrap;
}

.brand-name {
    font-size: 22px;
    font-weight: 500;
    line-height: 27px;
}

.brand-url {
    font: bold 10px/8px "DejaVu Sans", sans-serif;
}
```
